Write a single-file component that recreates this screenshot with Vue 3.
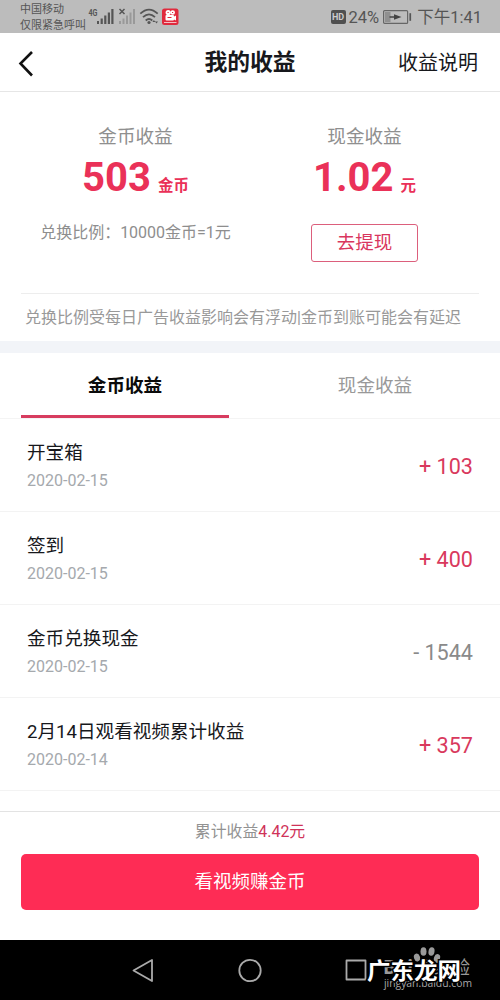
<script setup>
const rows = [
  { title: '开宝箱', date: '2020-02-15', amount: '+ 103', gain: true },
  { title: '签到', date: '2020-02-15', amount: '+ 400', gain: true },
  { title: '金币兑换现金', date: '2020-02-15', amount: '- 1544', gain: false },
  { title: '2月14日观看视频累计收益', date: '2020-02-14', amount: '+ 357', gain: true },
]
</script>

<template>
  <div class="screen">
    <div class="status">
      <div class="carrier"><span>中国移动</span><span>仅限紧急呼叫</span></div>
      <svg class="signals" width="96" height="33" viewBox="88 0 96 33">
        <text x="88.5" y="15.5" font-size="8.5" font-weight="700" fill="#555" textLength="9" lengthAdjust="spacingAndGlyphs">4G</text>
        <g fill="#555">
          <rect x="97" y="21" width="2" height="3" /><rect x="100.6" y="18.5" width="2.2" height="5.5" />
          <rect x="104.2" y="15.5" width="2.2" height="8.5" /><rect x="107.8" y="12.5" width="2.2" height="11.5" />
          <rect x="111.3" y="9" width="2.2" height="15" />
        </g>
        <path d="M119.5 9l5 5M124.5 9l-5 5" stroke="#555" stroke-width="1.5" />
        <g fill="#999">
          <rect x="119" y="21" width="2" height="3" /><rect x="122.5" y="18.5" width="2" height="5.5" />
          <rect x="126" y="15.5" width="2" height="8.5" /><rect x="129.5" y="12.5" width="2" height="11.5" />
          <rect x="133" y="9" width="2" height="15" />
        </g>
        <g fill="none" stroke="#555" stroke-width="1.8">
          <path d="M140.300 13.700Q149 5.500 157.700 13.700" /><path d="M143 17.200Q149 11.500 155 17.200" />
          <path d="M145.700 20.500Q149 17.500 152.300 20.500" />
        </g>
        <circle cx="149" cy="22.5" r="1.6" fill="#555" />
        <path d="M152.400 22l1.500-2 1.500 2zM155 21.500h3l-1.500 2z" fill="#555" />
        <rect x="162" y="8.5" width="16.5" height="16.5" rx="2.5" fill="#e02a3d" />
        <g fill="#fff">
          <circle cx="168.200" cy="12.500" r="2.600" /><circle cx="172.700" cy="12.500" r="2.300" />
          <rect x="165.500" y="15" width="8.500" height="5.500" rx="1" /><path d="M173 17l3-1.500v5L173 19z" />
          <rect x="164" y="22" width="12.500" height="1" opacity=".7" />
        </g>
        <path d="M167.500 12.500h1.200M172 12.500h1.200M167.500 17.500h4" stroke="#e02a3d" />
      </svg>
      <div class="status-right">
        <span class="hd">HD</span>
        <span class="percent">24%</span>
        <svg class="battery" width="29" height="14" viewBox="0 0 29 14">
          <rect x=".6" y=".6" width="24" height="12.8" rx="1" fill="none" stroke="#666" stroke-width="1.2" />
          <rect x="2" y="2" width="5.5" height="10" fill="#909090" />
          <path d="M6.500 6.200h4.500V4.200l7.500 2.800-7.500 2.800V7.800H6.500z" fill="#444" />
          <rect x="26.4" y="3.2" width="1.7" height="7.6" fill="#555" />
        </svg>
        <span class="time">下午1:41</span>
      </div>
    </div>

    <header class="header">
      <svg class="back" width="18" height="28" viewBox="0 0 18 28">
        <path d="M14 3L2.500 14.500 14 26.500" fill="none" stroke="#111" stroke-width="2.600" />
      </svg>
      <h1>我的收益</h1>
      <span class="help">收益说明</span>
    </header>

    <section class="summary">
      <div class="balances">
        <div class="balance">
          <div class="label">金币收益</div>
          <div class="value"><span>503</span><small>金币</small></div>
          <div class="rate">兑换比例：10000金币=1元</div>
        </div>
        <div class="balance">
          <div class="label">现金收益</div>
          <div class="value"><span>1.02</span><small>元</small></div>
          <button class="withdraw">去提现</button>
        </div>
      </div>
      <div class="note">兑换比例受每日广告收益影响会有浮动|金币到账可能会有延迟</div>
    </section>

    <nav class="tabs">
      <div class="tab active">金币收益</div>
      <div class="tab">现金收益</div>
    </nav>

    <main class="list">
      <div v-for="row in rows" :key="row.title" class="row">
        <div>
          <div class="title">{{ row.title }}</div>
          <div class="date">{{ row.date }}</div>
        </div>
        <div class="amount" :class="{ gain: row.gain }">{{ row.amount }}</div>
      </div>
    </main>

    <footer class="footer">
      <div class="total">累计收益<b>4.42元</b></div>
      <button class="watch">看视频赚金币</button>
    </footer>

    <div class="system">
      <svg width="500" height="60" viewBox="0 0 500 60">
        <g fill="none" stroke="#aaa" stroke-width="1.8" stroke-linejoin="round">
          <path d="M133.500 30.500L152 20v21z" /><circle cx="250" cy="30.500" r="10.700" />
          <rect x="346.500" y="20.500" width="19" height="19" />
        </g>
        <g class="brand" fill="#999">
          <text x="383" y="34" font-size="19" font-weight="700">Bai</text>
          <text x="434" y="34" font-size="18">经验</text>
          <ellipse cx="417" cy="17.500" rx="3" ry="4" transform="rotate(-18 417 17.500)" />
          <ellipse cx="423.500" cy="11.500" rx="3" ry="4.300" />
          <ellipse cx="431.500" cy="11.500" rx="3" ry="4.300" transform="rotate(10 431.500 11.500)" />
          <ellipse cx="437" cy="18" rx="3" ry="4" transform="rotate(20 437 18)" />
          <path d="M420 29c0-5 4-10 8-10s7 5 7 10z" />
          <text x="384" y="46.500" font-size="11.500" fill="#aaa" textLength="88" lengthAdjust="spacingAndGlyphs">jingyan.baidu.com</text>
        </g>
        <text class="site" x="367" y="39" textLength="94" lengthAdjust="spacingAndGlyphs">广东龙网</text>
      </svg>
    </div>
  </div>
</template>

<style>
body { margin: 0; background: #fff; }
</style>

<style scoped>
.screen { width: 500px; height: 1000px; overflow: hidden; display: flex; flex-direction: column; background: #fff; font-family: Roboto, "Noto Sans CJK SC", sans-serif; color: #17181c; }
.screen * { box-sizing: border-box; }
.status { height: 33px; flex: none; display: flex; background: #bcbcbc; color: #555; }
.carrier { width: 88px; padding: 2px 0 0 20px; font-size: 11px; line-height: 15.6px; display: flex; flex-direction: column; white-space: nowrap; }
.signals { font-family: Roboto, sans-serif; }
.status-right { margin-left: auto; padding-right: 18px; display: flex; align-items: center; white-space: nowrap; }
.hd { width: 15px; height: 14px; border-radius: 2px; background: #505050; color: #ccc; font-size: 9px; font-weight: 700; line-height: 14px; text-align: center; }
.percent { margin-left: 3px; font-size: 16.5px; line-height: 31px; padding-top: 2px; }
.battery { margin-left: 4px; }
.time { margin-left: 5px; font-size: 16.5px; line-height: 31px; padding-top: 2px; }
.header { height: 59px; flex: none; display: grid; grid-template-columns: 150px 1fr 150px; align-items: center; border-bottom: 1px solid #e6e6e6; }
.back { margin-left: 18px; margin-top: 1px; }
h1 { margin: 2px 0 0; font-size: 22.8px; line-height: 32px; font-weight: 700; text-align: center; }
.help { justify-self: end; margin: 2px 22px 0 0; font-size: 20px; line-height: 30px; }
.summary { height: 249px; flex: none; }
.balances { height: 202px; margin: 0 21px; padding-top: 31px; display: grid; grid-template-columns: 229px 229px; border-bottom: 1px solid #ededed; }
.balance { text-align: center; }
.label { font-size: 18.6px; line-height: 28px; color: #8f8f8f; }
.value { height: 53px; display: flex; justify-content: center; align-items: baseline; color: #ea3158; font-weight: 700; line-height: 53px; }
.value span { font-size: 40px; }
.value small { font-size: 15.5px; margin-left: 7px; }
.rate { margin-top: 17px; font-size: 16px; line-height: 24px; color: #8e8e8e; white-space: nowrap; }
.withdraw { width: 107px; height: 38px; margin-top: 20px; padding: 0; border: 1px solid #dc5f7c; border-radius: 3px; background: #fff; color: #d9365e; font-family: inherit; font-size: 18.5px; line-height: 36px; display: inline-block; }
.note { padding-left: 25px; font-size: 16px; line-height: 48px; color: #999; white-space: nowrap; }
.tabs { height: 78px; flex: none; display: flex; border-top: 12px solid #f2f4f8; border-bottom: 1px solid #f4f4f4; padding: 0 21px; justify-content: space-between; }
.tab { width: 208px; height: 65px; text-align: center; font-size: 18.6px; line-height: 66px; color: #999; }
.tab.active { color: #0b0b0b; font-weight: 700; border-bottom: 3px solid #d73c5f; }
.list { height: 392px; flex: none; }
.row { height: 93.200px; display: flex; justify-content: space-between; padding: 20px 27px 0 27px; border-bottom: 1px solid #f3f3f3; }
.row:first-child { height: 92.500px; }
.title { font-size: 18.6px; line-height: 28px; }
.date { font-size: 16px; line-height: 24px; margin-top: 2px; color: #a5a9ad; }
.amount { font-size: 21.6px; line-height: 56px; color: #8a8a8a; }
.amount.gain { color: #d9395d; }
.footer { height: 129px; flex: none; padding: 0 21px; border-top: 1px solid #e3e3e3; text-align: center; }
.total { font-size: 15.900px; line-height: 24px; margin-top: 8px; color: #929292; }
.total b { font-weight: 400; color: #cf3359; }
.watch { display: block; width: 458px; height: 56px; margin-top: 10px; padding: 0; border: 0; border-radius: 5px; background: #fe2c55; color: #fff; font-family: inherit; font-size: 18.5px; line-height: 54px; }
.system { height: 60px; flex: none; background: #000; }
.system svg { display: block; }
.brand { font-family: "Open Sans", "Noto Sans CJK SC", sans-serif; }
.site { font-family: "Noto Sans CJK SC", sans-serif; font-size: 22.5px; font-weight: 700; fill: #fff; stroke: #000; stroke-width: 3px; paint-order: stroke; }
</style>
